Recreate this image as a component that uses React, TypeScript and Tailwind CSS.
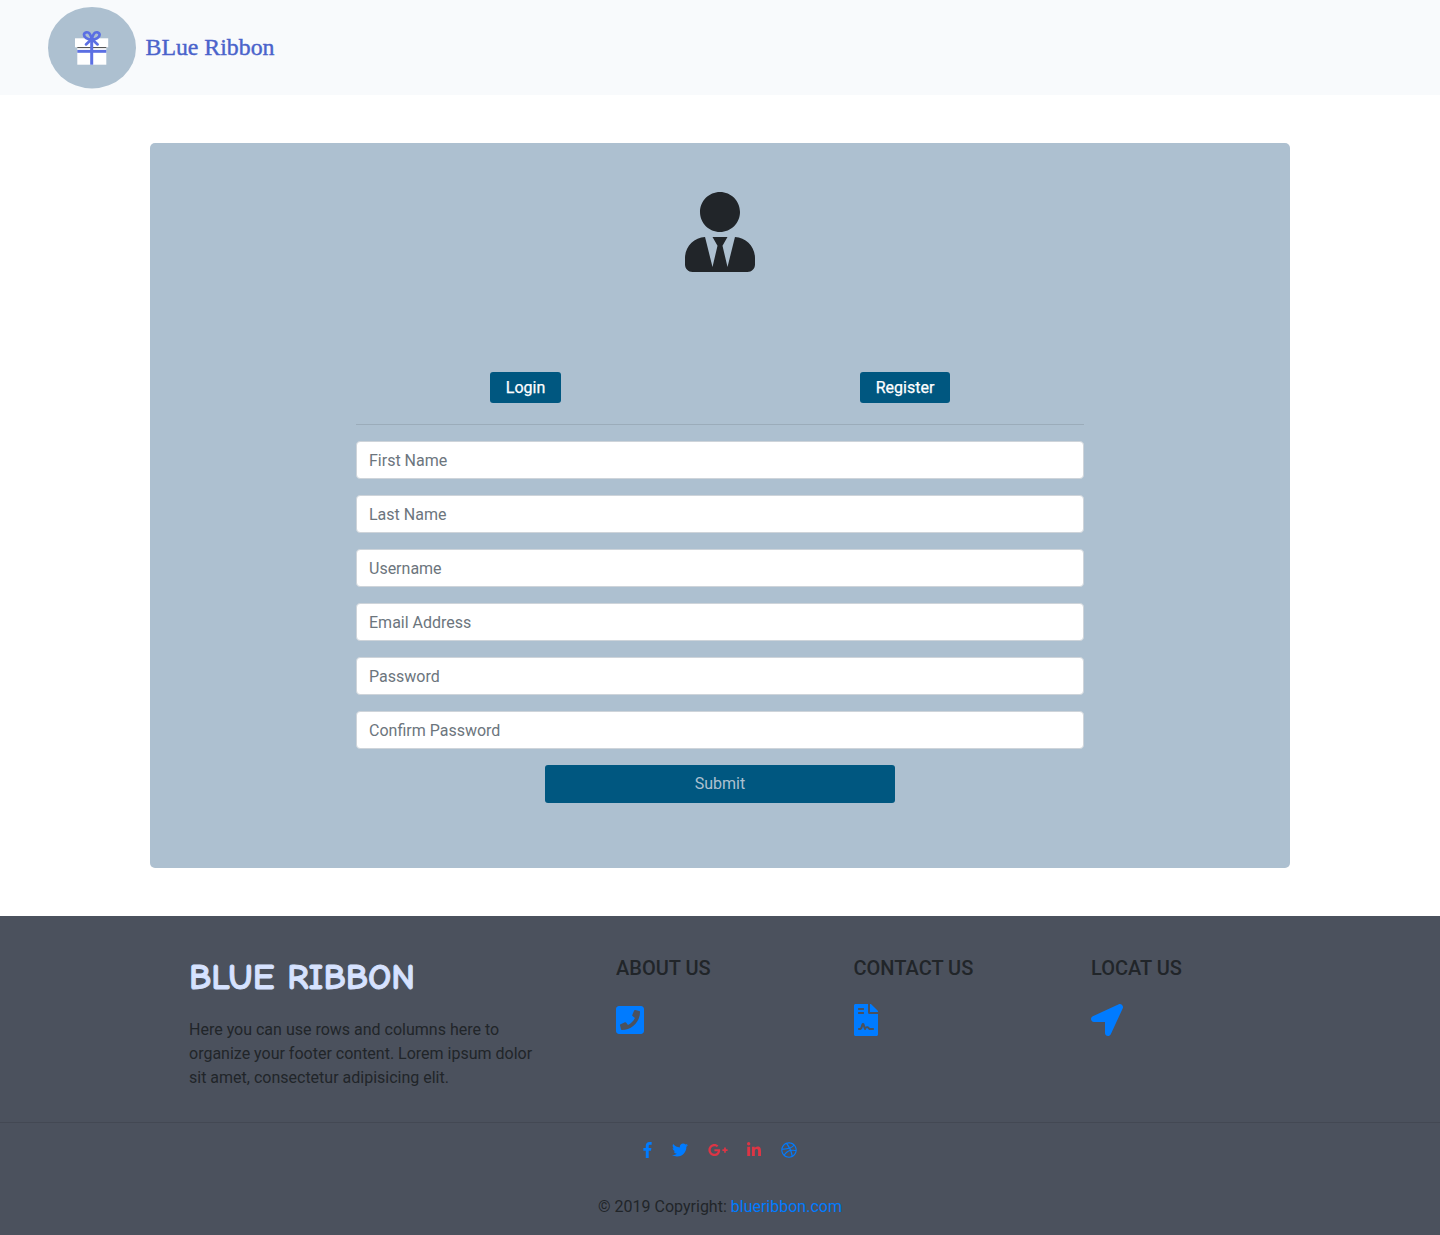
import React from "react";
import {
  FaUserTie,
  FaPhoneSquare,
  FaFileContract,
  FaLocationArrow,
  FaTwitter,
  FaGooglePlusG,
  FaLinkedinIn,
  FaDribbble,
} from "react-icons/fa";

const fields = ["First Name", "Last Name", "Username", "Email Address", "Password", "Confirm Password"];

function GiftLogo() {
  return (
    <svg width="88" height="82" viewBox="0 0 88 82" className="block shrink-0">
      <ellipse cx="44" cy="40.7" rx="44" ry="40.7" fill="#adc0d0" />
      <rect x="27" y="31.3" width="33.2" height="9" fill="#fff" />
      <rect x="29.3" y="40" width="29" height="17.7" fill="#fff" />
      <rect x="29.3" y="40.1" width="29" height="1" fill="#444" />
      <rect x="29.3" y="42.9" width="29" height="2.9" fill="#5b6fe3" />
      <rect x="42.2" y="32" width="3" height="25.7" fill="#5b6fe3" />
      <g fill="none" stroke="#5b6fe3" strokeWidth="2.7" strokeLinecap="round" strokeLinejoin="round">
        <path d="M43.8 32.7C39.5 32.4 35.9 30.3 36 27.7C36.2 24.8 40.2 24.5 41.7 26.7C42.8 28.2 43.5 30.5 43.8 32.7Z" />
        <path d="M43.8 32.7C48.1 32.4 51.7 30.3 51.6 27.7C51.4 24.8 47.4 24.5 45.9 26.7C44.8 28.2 44.1 30.5 43.8 32.7Z" />
        <path d="M43.8 32L38 37.4M43.8 32L49.6 37.4" />
      </g>
    </svg>
  );
}

function FacebookIcon() {
  return (
    <svg viewBox="0 0 264 512" fill="currentColor" className="mr-5 h-4 w-[9px]">
      <path d="M76.7 512V283H0v-91h76.7v-71.7C76.7 42.4 124.3 0 193.8 0c33.3 0 61.9 2.5 70.2 3.6V85h-48.2c-37.8 0-45.1 18-45.1 44.3V192H256l-11.7 91h-73.6v229" />
    </svg>
  );
}

export default function App() {
  return (
    <div className="min-h-[1235px] bg-white font-[Roboto,sans-serif] text-base leading-6 text-[#212529]">
      <header className="flex h-[95px] items-center bg-[#f8fafc] pl-12">
        <GiftLogo />
        <svg width="140" height="40" viewBox="0 0 140 40" className="ml-2 block">
          <text
            x="1.5"
            y="27"
            textLength="129"
            lengthAdjust="spacingAndGlyphs"
            fill="#4a63cb"
            stroke="#4a63cb"
            strokeWidth="0.4"
            className="font-[Harrington,'Liberation_Serif',serif] text-[23px]"
          >
            BLue Ribbon
          </text>
        </svg>
      </header>

      <main className="mx-auto my-12 h-[725px] w-[1140px] rounded-[5px] bg-[#adc0d0] pt-[49px]">
        <FaUserTie className="mx-auto block h-20 w-[70px]" />
        <form className="mx-auto mt-[100px] w-[728px]" onSubmit={(e) => e.preventDefault()}>
          <div className="flex justify-between px-[134px]">
            <button type="button" className="h-[31px] w-[71px] rounded-[3px] bg-[#005780] text-white [-webkit-text-stroke:0.25px_white]">
              Login
            </button>
            <button type="button" className="h-[31px] w-[90px] rounded-[3px] bg-[#005780] text-white [-webkit-text-stroke:0.25px_white]">
              Register
            </button>
          </div>
          <hr className="mt-[21px] mb-4 border-t border-black/10" />
          <div className="flex flex-col gap-4">
            {fields.map((f) => (
              <input
                key={f}
                aria-label={f}
                placeholder={f}
                className="h-[38px] w-full rounded border border-[#ced4da] bg-white px-3 placeholder:text-[#6c757d]"
              />
            ))}
          </div>
          <button className="mx-auto mt-4 block h-[38px] w-[350px] rounded-[3px] bg-[#005780] text-[#adc0d0]">
            Submit
          </button>
        </form>
      </main>

      <footer className="h-[319px] bg-[#4b515d]">
        <div className="flex h-[206px] pt-10 pl-[189px]">
          <div className="w-[427px]">
            <svg width="228" height="42" viewBox="0 0 228 42" className="block">
              <text
                x="0"
                y="33"
                textLength="226"
                lengthAdjust="spacingAndGlyphs"
                fill="#d6e2ff"
                stroke="#d6e2ff"
                strokeWidth="0.9"
                className="font-['Comic_Sans_MS','Comic_Neue',Lato,sans-serif] text-[37px] font-bold"
              >
                BLUE RIBBON
              </text>
            </svg>
            <p className="mt-5 w-[350px]">
              Here you can use rows and columns here to organize your footer content. Lorem ipsum dolor sit amet,
              consectetur adipisicing elit.
            </p>
          </div>
          <div className="w-[237.5px]">
            <h5 className="text-xl leading-6 font-medium">ABOUT US</h5>
            <FaPhoneSquare className="mt-6 h-8 w-7 text-[#007bff]" />
          </div>
          <div className="w-[237.5px]">
            <h5 className="text-xl leading-6 font-medium">CONTACT US</h5>
            <FaFileContract className="mt-6 h-8 w-6 text-[#007bff]" />
          </div>
          <div>
            <h5 className="text-xl leading-6 font-medium">LOCAT US</h5>
            <FaLocationArrow className="mt-6 h-8 w-8 text-[#007bff]" />
          </div>
        </div>
        <hr className="border-t border-black/10" />
        <div className="flex items-center justify-center pt-[19px] text-[#007bff]">
          <FacebookIcon />
          <FaTwitter className="mr-5 h-4 w-4" />
          <FaGooglePlusG className="mr-[19px] h-4 w-5 text-[#dc3545]" />
          <FaLinkedinIn className="mr-5 h-4 w-[14px] text-[#dc3545]" />
          <FaDribbble className="h-4 w-4" />
        </div>
        <p className="mt-[37px] text-center">
          © 2019 Copyright: <a href="#" className="text-[#007bff]">blueribbon.com</a>
        </p>
      </footer>
    </div>
  );
}
